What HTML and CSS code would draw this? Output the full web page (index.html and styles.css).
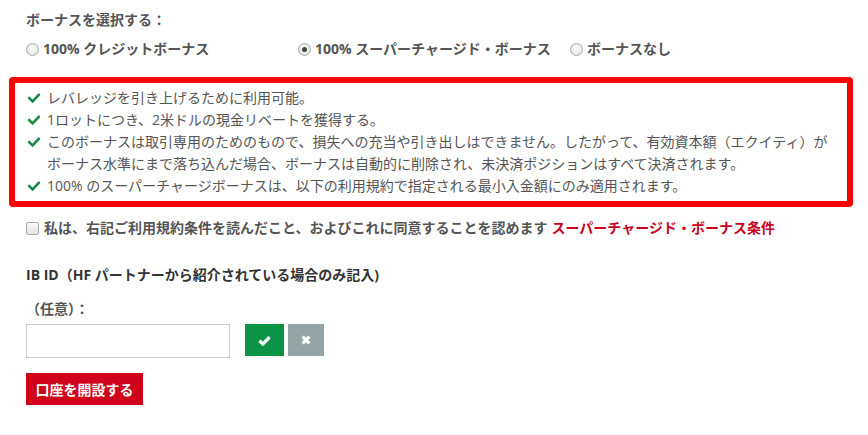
FILE: index.html
```html
<!DOCTYPE html>
<html lang="ja">
<head>
<meta charset="utf-8">
<title>ボーナス選択</title>
<link rel="stylesheet" href="styles.css">
</head>
<body>
<div class="page">
  <div class="section">
    <div class="heading">ボーナスを選択する：</div>
    <div class="radios">
      <label class="opt"><span class="radio"></span>100% クレジットボーナス</label>
      <label class="opt"><span class="radio checked"></span>100% スーパーチャージド・ボーナス</label>
      <label class="opt"><span class="radio"></span>ボーナスなし</label>
    </div>
  </div>

  <ul class="notice">
    <li><svg class="tick" viewBox="0 0 12 10"><path d="M1.2 5.2 L4.6 8.4 L10.8 1.8"/></svg><span>レバレッジを引き上げるために利用可能。</span></li>
    <li><svg class="tick" viewBox="0 0 12 10"><path d="M1.2 5.2 L4.6 8.4 L10.8 1.8"/></svg><span>1ロットにつき、2米ドルの現金リベートを獲得する。</span></li>
    <li><svg class="tick" viewBox="0 0 12 10"><path d="M1.2 5.2 L4.6 8.4 L10.8 1.8"/></svg><span>このボーナスは取引専用のためのもので、損失への充当や引き出しはできません。したがって、有効資本額（エクイティ）がボーナス水準にまで落ち込んだ場合、ボーナスは自動的に削除され、未決済ポジションはすべて決済されます。</span></li>
    <li><svg class="tick" viewBox="0 0 12 10"><path d="M1.2 5.2 L4.6 8.4 L10.8 1.8"/></svg><span>100% のスーパーチャージボーナスは、以下の利用規約で指定される最小入金額にのみ適用されます。</span></li>
  </ul>

  <div class="section">
    <label class="agree"><span class="checkbox"></span>私は、右記ご利用規約条件を読んだこと、およびこれに同意することを認めます <a class="terms" href="#">スーパーチャージド・ボーナス条件</a></label>

    <div class="ib-title">IB ID（HF パートナーから紹介されている場合のみ記入)</div>
    <div class="ib-sub">（任意）：</div>
    <div class="ib-row">
      <input class="ib-input" type="text">
      <button class="btn-ok" type="button"><svg viewBox="0 0 12 10"><path d="M1.3 5.2 L4.5 8.2 L10.7 1.8"/></svg></button>
      <button class="btn-clear" type="button"><svg viewBox="0 0 10 10"><path d="M1.6 1.6 L8.4 8.4 M8.4 1.6 L1.6 8.4"/></svg></button>
    </div>
    <button class="submit" type="button">口座を開設する</button>
  </div>
</div>
</body>
</html>
```

FILE: styles.css
```css
html, body {
  margin: 0;
  padding: 0;
  background: #fff;
}

body {
  font-family: "Open Sans", "Noto Sans CJK JP", sans-serif;
  font-size: 14px;
  color: #555;
}

.page {
  padding: 10px 15px 0 9px;
}

.section {
  padding-left: 17px;
}

.heading {
  font-weight: bold;
  line-height: 20px;
  color: #555;
}

.radios {
  margin-top: 9px;
  display: grid;
  grid-template-columns: 272px 272px 272px;
  line-height: 20px;
}

.opt {
  display: flex;
  align-items: center;
  gap: 4px;
  font-weight: bold;
  color: #555;
}

.radio {
  width: 11px;
  height: 11px;
  border-radius: 50%;
  border: 1px solid #a9a9a9;
  background: radial-gradient(circle at 50% 40%, #fdfdfd 0%, #e6e6e6 70%, #d4d4d4 100%);
  flex: none;
  position: relative;
}

.radio.checked::after {
  content: "";
  position: absolute;
  left: 3px;
  top: 3px;
  width: 5px;
  height: 5px;
  border-radius: 50%;
  background: #444;
}

.notice {
  list-style: none;
  margin: 18px 0 0 0;
  padding: 4px 13px 4px 13px;
  border: 6px solid #ff0000;
  border-radius: 4px;
  line-height: 22px;
  color: #555;
}

.notice li {
  display: flex;
  align-items: flex-start;
}

.tick {
  width: 12px;
  height: 10px;
  flex: none;
  margin: 6px 7px 0 0;
}

.tick path {
  fill: none;
  stroke: #1a8a44;
  stroke-width: 2.6;
  stroke-linecap: square;
}

.agree {
  margin-top: 11px;
  display: flex;
  align-items: center;
  line-height: 20px;
  font-weight: bold;
  color: #555;
}

.checkbox {
  width: 11px;
  height: 11px;
  border: 1px solid #a9a9a9;
  border-radius: 2px;
  background: linear-gradient(#fcfcfc, #e4e4e4);
  margin-right: 5px;
  flex: none;
}

.terms {
  color: #c8001e;
  text-decoration: none;
  margin-left: 4px;
}

.ib-title {
  margin-top: 27px;
  line-height: 20px;
  font-weight: bold;
  color: #333;
}

.ib-sub {
  margin-top: 14px;
  line-height: 20px;
  font-weight: bold;
  color: #555;
}

.ib-row {
  margin-top: 5px;
  display: flex;
  align-items: flex-start;
}

.ib-input {
  width: 204px;
  height: 34px;
  box-sizing: border-box;
  border: 1px solid #ccc;
  margin: 0 15px 0 0;
  padding: 0 8px;
  font: inherit;
}

.btn-ok,
.btn-clear {
  height: 32px;
  border: none;
  padding: 0;
  margin: 0;
  display: flex;
  align-items: center;
  justify-content: center;
}

.btn-ok {
  width: 39px;
  background: #0b9446;
  margin-right: 4px;
}

.btn-ok svg {
  width: 13px;
  height: 11px;
}

.btn-ok path {
  fill: none;
  stroke: #fff;
  stroke-width: 3;
}

.btn-clear {
  width: 36px;
  background: #95a5a6;
}

.btn-clear svg {
  width: 10px;
  height: 10px;
}

.btn-clear path {
  fill: none;
  stroke: #fff;
  stroke-width: 3;
}

.submit {
  margin-top: 15px;
  width: 117px;
  height: 32px;
  border: none;
  padding: 0;
  background: #d0031a;
  color: #fff;
  font-family: "Open Sans", "Noto Sans CJK JP", sans-serif;
  font-size: 14px;
  font-weight: bold;
}
```
